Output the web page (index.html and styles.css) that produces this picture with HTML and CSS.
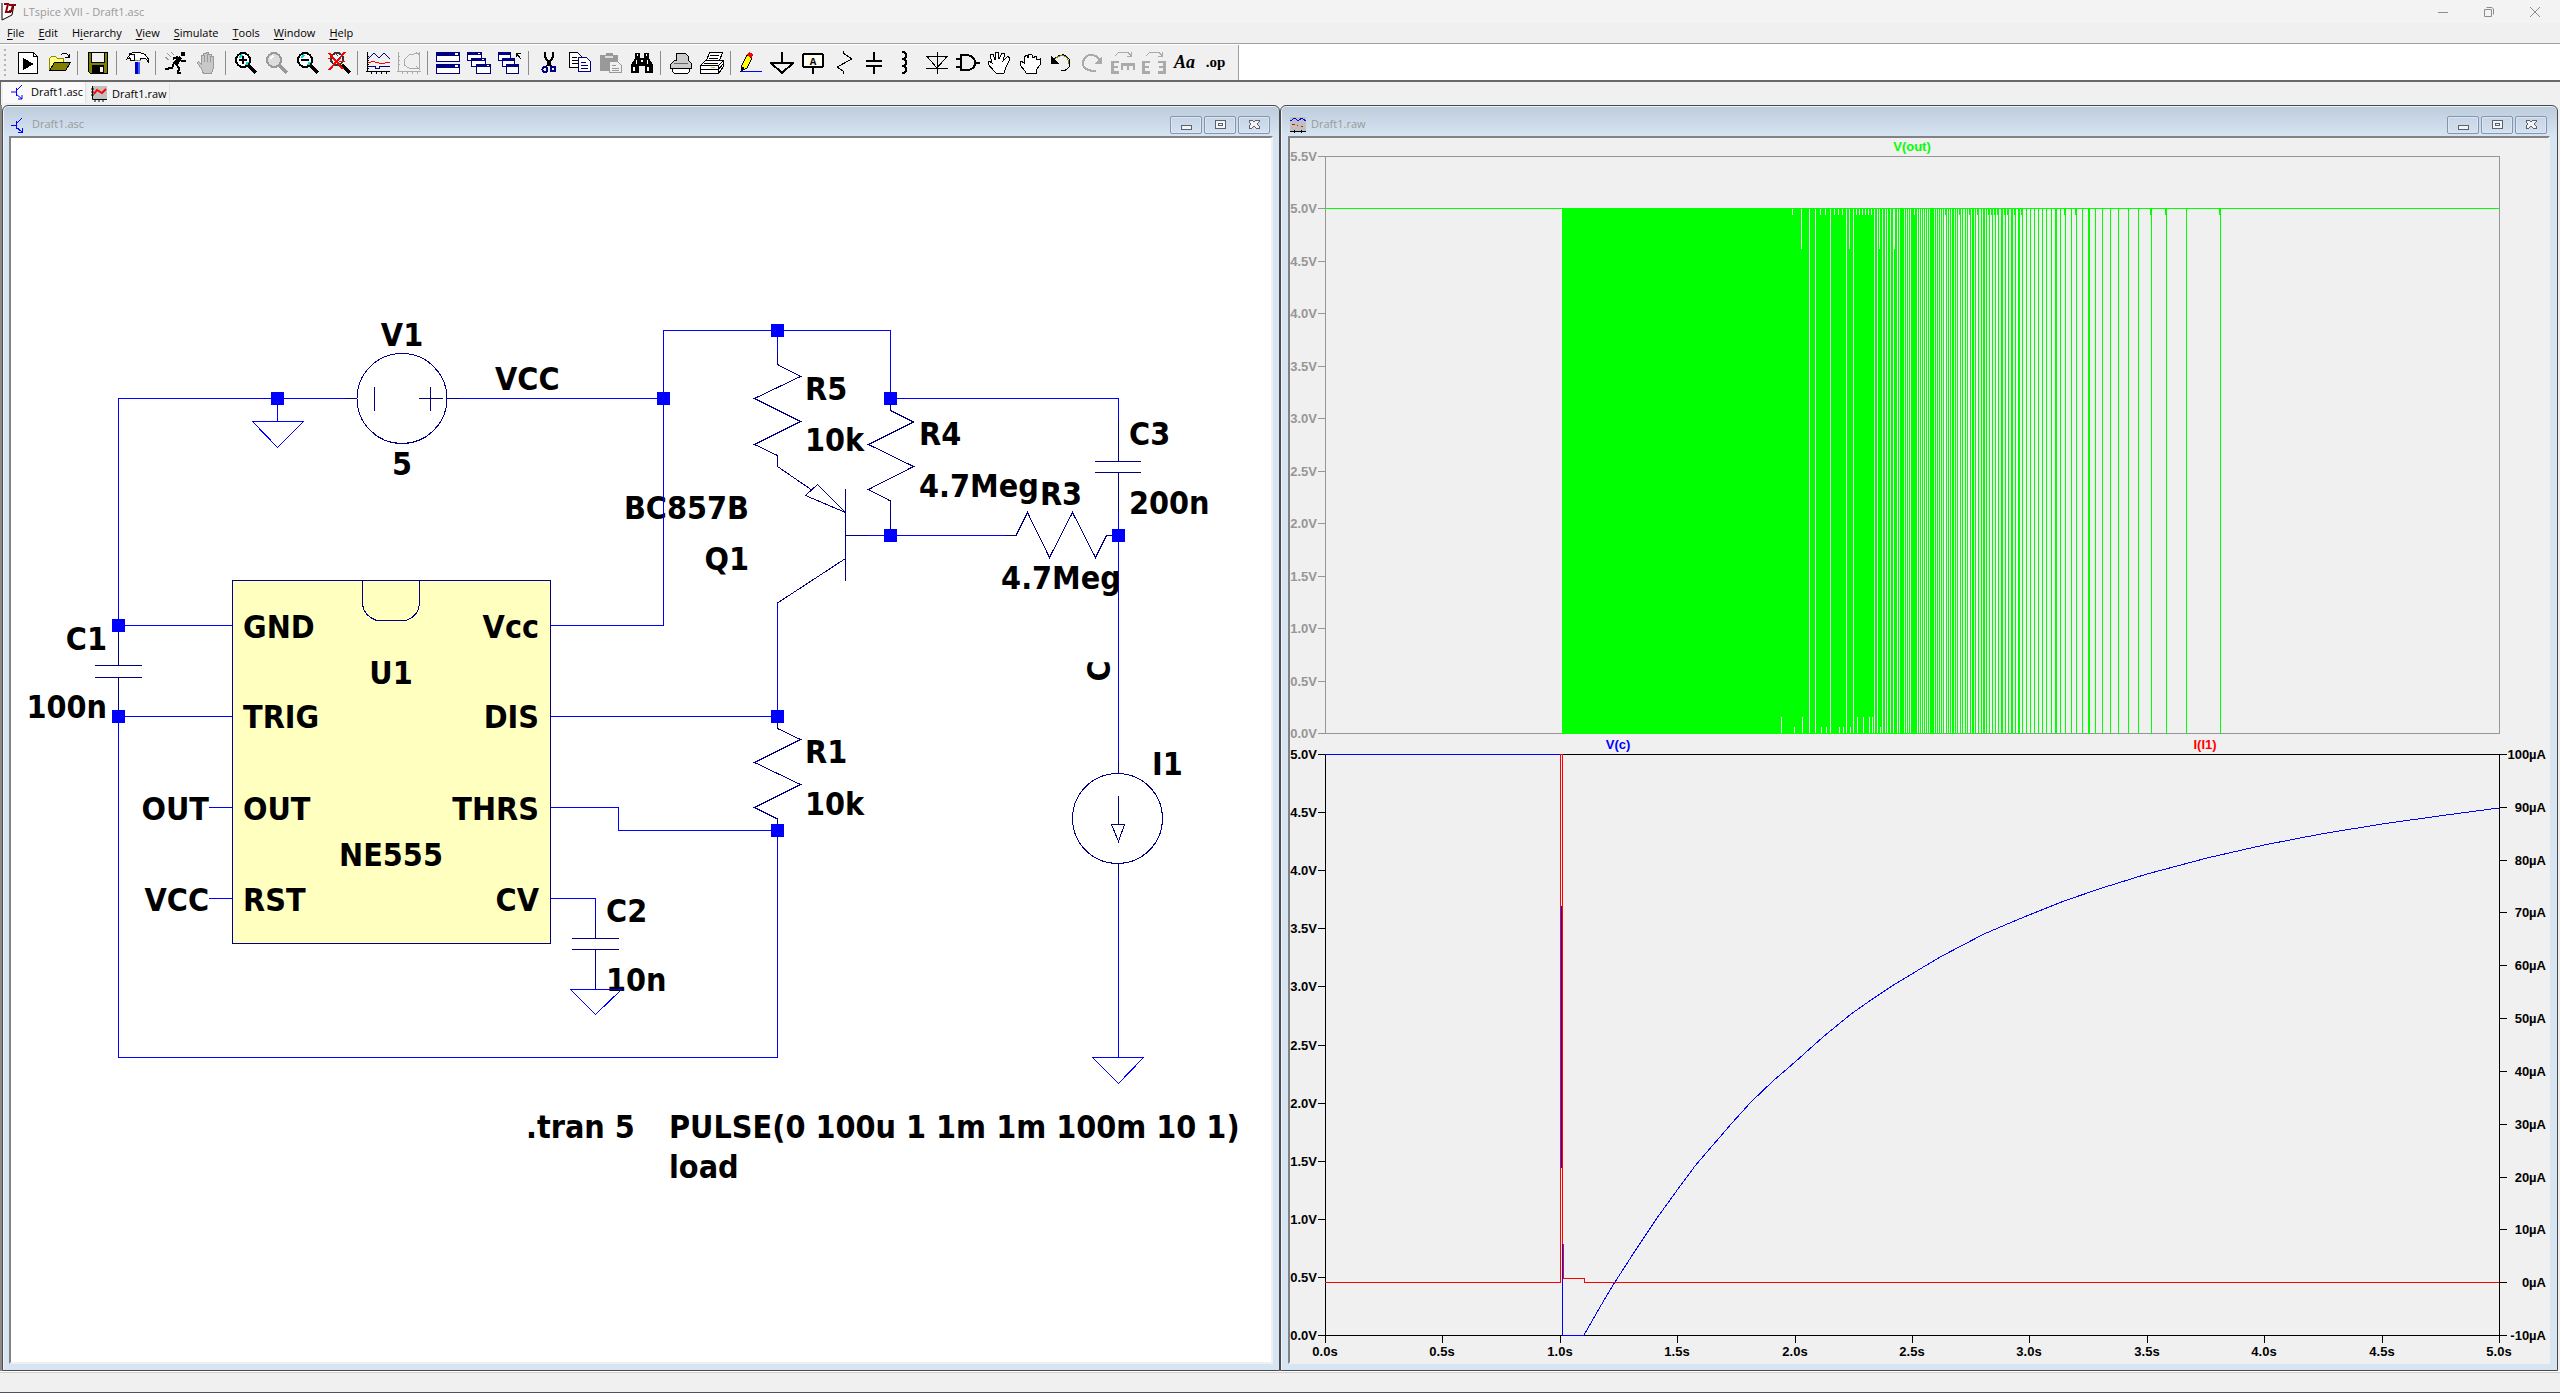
FILE: index.html
```html
<!DOCTYPE html>
<html lang="en">
<head>
    <meta charset="UTF-8">
    <meta name="viewport" content="width=device-width, initial-scale=1.0">
    <title>LTspice XVII - Draft1.asc</title>
    <link rel="stylesheet" href="styles.css">
</head>
<body>
    <header class="titlebar">
        <svg class="app-icon" width="16" height="20" viewBox="0 0 16 20">
            <path d="M1 1V18L11 13L13 2" fill="#fff" stroke="#000"/>
            <path d="M3 2H7L5 10H9V8M8 3H15M12 3L10 10" fill="none" stroke="#8b0000" stroke-width="2"/>
        </svg>
        <span class="app-title">LTspice XVII - Draft1.asc</span>
        <div class="app-controls">
            <button type="button" aria-label="Minimize"><svg width="10" height="10"><path d="M0 5.5H10"/></svg></button>
            <button type="button" aria-label="Restore"><svg width="10" height="10"><path d="M.5 2.5H7.5V9.5H.5ZM2.5 .5H8L9.5 2V7.5"/></svg></button>
            <button type="button" aria-label="Close"><svg width="10" height="10"><path d="M0 0L10 10M10 0L0 10"/></svg></button>
        </div>
    </header>

    <nav class="menubar">
        <button type="button"><u>F</u>ile</button>
        <button type="button"><u>E</u>dit</button>
        <button type="button">H<u>i</u>erarchy</button>
        <button type="button"><u>V</u>iew</button>
        <button type="button"><u>S</u>imulate</button>
        <button type="button"><u>T</u>ools</button>
        <button type="button"><u>W</u>indow</button>
        <button type="button"><u>H</u>elp</button>
    </nav>

    <div class="toolbar-row">
        <div class="toolbar">
            <span class="grip"></span>
            <button type="button" title="Run"><svg viewBox="0 0 24 24"><path d="M2.500 1.500H17.500L21.500 5.500V22.500H2.500Z" fill="#fff" stroke="#000"/><path d="M17.500 1.500V5.500H21.500" fill="none" stroke="#000"/><path d="M7 7V19L18 13Z"/></svg></button>
            <button type="button" title="Open"><svg viewBox="0 0 24 24"><path d="M2.500 19V7.500L4.500 5.500H8.500L10.500 7.500H16.500V11.500" fill="#ffff80" stroke="#888800"/><path d="M2.500 19.500L7.500 11.500H23.500L18.500 19.500Z" fill="#808000" stroke="#000"/><path d="M14 4L16 2H19L21 4V6M18 6H23M22 3V7" fill="none" stroke="#000"/></svg></button>
            <i class="sep"></i>
            <button type="button" title="Save"><svg viewBox="0 0 24 24"><path d="M2.500 1.500H21.500V22.500H4.500L2.500 20.500Z" fill="#808000" stroke="#000"/><path d="M6 2H18V11H6Z" fill="#f0f0f0"/><path d="M6 14H18V23H6Z"/><path d="M14 16H17V21H14Z" fill="#f0f0f0"/><path d="M5.500 2V11.500H18.500V2" fill="none" stroke="#000"/></svg></button>
            <i class="sep"></i>
            <button type="button" title="Control Panel"><svg viewBox="0 0 24 24"><path d="M9.500 10V4L5 3.500L1.500 8.500L4.500 6.500L6 9.500ZM4 3L9 1.500H15L20 3.500L23.500 8V11L20 7L15 8V10" fill="#fff" stroke="#000"/><path d="M9.500 8.500H15.500V10H9.500Z" fill="#888"/><path d="M10 11H15V23H10Z" fill="#0000c0"/><path d="M13 11H15V23H13Z" fill="#3060ff"/></svg></button>
            <i class="sep"></i>
            <button type="button" title="Run simulation"><svg viewBox="0 0 24 24"><path d="M17 1H21V5H17ZM15 5L18 7L14 14L9 12ZM9 6L14 5V7L9 9ZM17 9L22 9V11L17 11Z"/><path d="M10 12L8 17L1 18M12 13L15 17L14 22H17" fill="none" stroke="#000" stroke-width="2"/><path d="M3 2L7 6M1 6L5 9M7 1L10 4" stroke="#999" fill="none"/></svg></button>
            <button type="button" title="Halt"><svg viewBox="0 0 24 24"><path d="M6.500 18L2.500 12L3.500 10.500L6.500 13V4H8.500V2H11.500V1H13.500V3H16.500V5H18.500V17L16.500 22.500H8.500Z" fill="#c8c8c8" stroke="#999"/><path d="M9.500 4V11M12.500 3V11M15.500 5V11" stroke="#999"/></svg></button>
            <i class="sep"></i>
            <button type="button" title="Zoom in"><svg viewBox="0 0 24 24"><circle cx="9" cy="9" r="7" fill="#fff" stroke="#000" stroke-width="2"/><path d="M5 7L8 4M12 14L14 11" stroke="#00dcdc" stroke-width="2"/><path d="M5 9H13M9 5V13" stroke="#000" stroke-width="2"/><path d="M14 14L22 22" stroke="#000" stroke-width="3"/></svg></button>
            <button type="button" title="Pan"><svg viewBox="0 0 24 24"><circle cx="9" cy="9" r="7" fill="#ddd" stroke="#999" stroke-width="2"/><path d="M5 8L8 5" stroke="#fff" stroke-width="2"/><path d="M14 14L22 22" stroke="#999" stroke-width="3"/></svg></button>
            <button type="button" title="Zoom out"><svg viewBox="0 0 24 24"><circle cx="9" cy="9" r="7" fill="#fff" stroke="#000" stroke-width="2"/><path d="M5 7L8 4M12 14L14 11" stroke="#00dcdc" stroke-width="2"/><path d="M5 9H13" stroke="#000" stroke-width="2"/><path d="M14 14L22 22" stroke="#000" stroke-width="3"/></svg></button>
            <button type="button" title="Zoom full extents"><svg viewBox="0 0 24 24"><circle cx="10" cy="8" r="6" fill="#cff" stroke="#333" stroke-width="2"/><path d="M15 14L23 22" stroke="#000" stroke-width="3"/><path d="M2 2L16 18M18 1L2 19" stroke="#f00" stroke-width="2"/><path d="M1 8L6 6M12 11L18 10M8 2L11 5" stroke="#f00"/></svg></button>
            <i class="sep"></i>
            <button type="button" title="Autorange"><svg viewBox="0 0 24 24"><path d="M1.500 1V20M0 20.500H24M1 5H3M1 9H3M1 13H3M1 17H3M5.500 20V23M10.500 20V23M15.500 20V23M20.500 20V23" fill="none" stroke="#000"/><path d="M2 8L8 2L13 7L18 2L24 8" fill="none" stroke="#000080"/><path d="M2 11.500H5M5 10.500H9M9 11.500H13M13 12.500H19M19 11.500H24" fill="none" stroke="#f00"/><path d="M2 15.500H9V17.500H13V15.500H24" fill="none" stroke="#000080"/></svg></button>
            <button type="button" title="FFT"><svg viewBox="0 0 24 24"><path d="M1.500 1V20M0 20.500H24M5.500 20V23M10.500 20V23M15.500 20V23M20.500 20V23M1 5H3M1 9H3M1 13H3M22 2L12 4L7 9V14L12 17L22 18M19 1L22 4M22 1V19M19 15L23 19" fill="none" stroke="#aaa"/></svg></button>
            <i class="sep"></i>
            <button type="button" title="Tile"><svg viewBox="0 0 24 24"><path d="M.5 1.500H23.500V10.500H.5ZM.5 13.500H23.500V22.500H.5Z" fill="#fff" stroke="#000080"/><path d="M0 1H24V5H0ZM0 13H24V17H0Z" fill="#000080"/><path d="M19 2H22V4H19ZM19 14H22V16H19Z" fill="#fff"/></svg></button>
            <button type="button" title="Cascade"><svg viewBox="0 0 24 24"><path d="M.5 1.500H14.500V9.500H.5ZM4.500 7.500H18.500V15.500H4.500ZM9.500 13.500H23.500V22.500H9.500Z" fill="#fff" stroke="#000080"/><path d="M0 1H15V4H0ZM5 7H19V10H5ZM10 13H24V16H10Z" fill="#000080"/><path d="M11 2H13V3H11ZM15 8H17V9H15ZM20 14H22V15H20Z" fill="#fff"/></svg></button>
            <button type="button" title="Close all"><svg viewBox="0 0 24 24"><path d="M.5 1.500H12.500V9.500H.5ZM4.500 7.500H16.500V15.500H4.500ZM8.500 13.500H20.500V22.500H8.500Z" fill="#fff" stroke="#000080"/><path d="M0 1H13V4H0ZM5 7H17V10H5ZM9 13H21V16H9Z" fill="#000080"/><path d="M23 8L18 2M18 6V2H23" fill="none" stroke="#000"/></svg></button>
            <i class="sep"></i>
            <button type="button" title="Cut"><svg viewBox="0 0 24 24"><path d="M8 1V6L14 15M16 1V6L10 15" fill="none" stroke="#000" stroke-width="2"/><circle cx="8" cy="18.500" r="2.500" fill="none" stroke="#000080" stroke-width="2"/><circle cx="16" cy="18" r="2.500" fill="none" stroke="#000080" stroke-width="2"/></svg></button>
            <button type="button" title="Copy"><svg viewBox="0 0 24 24"><path d="M1.500 1.500H9.500L13.500 5.500V16.500H1.500Z" fill="#fff" stroke="#000"/><path d="M4 6H9M4 9H11M4 12H11" stroke="#000"/><path d="M10.500 6.500H18.500L22.500 10.500V20.500H10.500Z" fill="#fff" stroke="#000080"/><path d="M13 11H18M13 14H20M13 17H20" stroke="#000080"/></svg></button>
            <button type="button" title="Paste"><svg viewBox="0 0 24 24"><path d="M1 4H7V2H14V4H19V20H1Z" fill="#999"/><path d="M6 5H14V7H6Z" fill="#ddd"/><path d="M10.500 10.500H18.500L22.500 14.500V21.500H10.500Z" fill="#f0f0f0" stroke="#999"/><path d="M13 14H17M13 17H20M13 19H20" stroke="#999"/></svg></button>
            <button type="button" title="Find"><svg viewBox="0 0 24 24"><path d="M5 2H10V7H14V2H19V7L23 14V22H15V15H9V22H1V14L5 7Z"/><path d="M7 3H8V5H7ZM16 3H17V5H16ZM6 9H7V13H6ZM11 9H13V11H11ZM17 9H18V13H17ZM3 16H5V20H3ZM17 16H19V20H17Z" fill="#fff"/></svg></button>
            <i class="sep"></i>
            <button type="button" title="Print"><svg viewBox="0 0 24 24"><path d="M7.500 9.500V2.500H16.500L19.500 5.500V9.500L22.500 12.500V17.500H1.500V13.500L5.500 9.500Z" fill="#ccc" stroke="#000"/><path d="M3.500 17.500V20.500L5.500 22.500H18.500L20.500 20.500V17.500Z" fill="#fff" stroke="#000"/><path d="M5 12H19" stroke="#666"/></svg></button>
            <button type="button" title="Print setup"><svg viewBox="0 0 24 24"><path d="M6.500 9.500L9.500 1.500H22.500L19.500 9.500" fill="#fff" stroke="#000"/><path d="M.5 14.500L5.500 9.500H23.500V15.500L18.500 22.500H.5ZM.5 14.500H18.500V22.500M18.500 14.500L23.500 9.500M.5 18.500H18.500M18.500 18.500L23.500 12.500" fill="#fff" stroke="#000"/><path d="M10 4H19M9 7H18M4 12H18" stroke="#000"/><path d="M11 16H15V17H11Z" fill="#cc0"/></svg></button>
            <i class="sep"></i>
            <button type="button" title="Wire"><svg viewBox="0 0 24 24"><path d="M8 4L13 7L8 17L2 20L3 14Z" fill="#ff0" stroke="#000"/><path d="M8 4L10 1L14 3L13 7Z" fill="#f00"/><path d="M2 15L6 17L2 20Z"/><path d="M2 20.500H23" stroke="#00f"/></svg></button>
            <button type="button" title="Ground"><svg viewBox="0 0 24 24"><path d="M12 1V12M1 12H23L12 22Z" fill="none" stroke="#000" stroke-width="2"/></svg></button>
            <button type="button" title="Label net"><svg viewBox="0 0 24 24"><rect x="2" y="3" width="20" height="13" rx="2" fill="#ffe" stroke="#000" stroke-width="2"/><path d="M12 16V23" stroke="#000" stroke-width="2"/><text class="ico-a" x="12" y="14">A</text></svg></button>
            <button type="button" title="Resistor"><svg viewBox="0 0 24 24"><path d="M11 0V2L20 8L5 16L11 20V23" fill="none" stroke="#000"/></svg></button>
            <button type="button" title="Capacitor"><svg viewBox="0 0 24 24"><path d="M11 1V10M11 15V23M3 10H19M3 15H19" fill="none" stroke="#000" stroke-width="2"/></svg></button>
            <button type="button" title="Inductor"><svg viewBox="0 0 24 24"><path d="M8 1H10Q15 4 10 8H8H10Q15 11 10 15H8H10Q15 18 10 22H8" fill="none" stroke="#000" stroke-width="2"/></svg></button>
            <button type="button" title="Diode"><svg viewBox="0 0 24 24"><path d="M12 1V23M1 5.500H23M1 17.500H23M2 5.500L12 17L22 5.500" fill="none" stroke="#000"/></svg></button>
            <button type="button" title="Component"><svg viewBox="0 0 24 24"><path d="M5 4H12Q19 6 19 12Q19 18 12 19H5ZM0 8H5M0 16H5M19 12H24" fill="none" stroke="#000" stroke-width="2"/></svg></button>
            <button type="button" title="Move"><svg viewBox="0 0 24 24"><path d="M7 20L1 13L2 10L5 12L3 4L6 3L8 9L8 2L11 1L12 8L15 2L18 3L16 10L21 5L23 8L19 16L17 22H9Z" fill="#fff" stroke="#000"/></svg></button>
            <button type="button" title="Drag"><svg viewBox="0 0 24 24"><path d="M7 20L2 14L3 10L6 12V6L9 4L10 7L11 3L14 4L15 7L18 5L19 9L22 8V14L18 19V22H8Z" fill="#fff" stroke="#000"/></svg></button>
            <button type="button" title="Undo"><svg viewBox="0 0 24 24"><path d="M4 10Q9 3 15 4Q22 7 21 14Q19 20 12 20" fill="none" stroke="#000"/><path d="M5 9Q9 4 15 5Q20 7 20 13" fill="none" stroke="#808000"/><path d="M2 5V13H10Z"/></svg></button>
            <button type="button" title="Redo"><svg viewBox="0 0 24 24"><path d="M21 10Q16 3 9 4Q2 7 3 14Q5 20 16 20" fill="none" stroke="#aaa" stroke-width="2"/><path d="M22 5V13H14Z" fill="#aaa"/></svg></button>
            <button type="button" title="Rotate"><svg viewBox="0 0 24 24"><path d="M4 5L8 1H17L20 5M16 5H20V1" fill="none" stroke="#aaa"/><path d="M0 10H8V12H3V15H7V17H3V20H8V23H0ZM10 12H24V19H22V15H18V19H16V15H12V19H10Z" fill="#aaa"/></svg></button>
            <button type="button" title="Mirror"><svg viewBox="0 0 24 24"><path d="M4 5L8 1H17L20 5M16 5H20V1" fill="none" stroke="#aaa"/><path d="M0 10H8V12H3V15H7V17H3V20H8V23H0ZM24 10H16V12H21V15H17V17H21V20H16V23H24Z" fill="#aaa"/></svg></button>
            <button type="button" title="Text" class="glyph text-tool">Aa</button>
            <button type="button" title="SPICE directive" class="glyph">.op</button>
        </div>
    </div>

    <div class="tabs">
        <button type="button" class="tab active">
            <svg width="16" height="16" viewBox="0 0 16 16"><path d="M0 8H5M5.500 4V12M5 7L11 1M5 10L11 15M11 11V15H7" fill="none" stroke="#00f" stroke-width="1"/></svg>
            Draft1.asc
        </button>
        <button type="button" class="tab">
            <svg width="16" height="16" viewBox="0 0 16 16"><path d="M1 0H16V13H1Z" fill="#c0c0c0"/><path d="M1.500 0V13.500H16M0 3H3M0 6H3M0 9H3M4 13V16M8 13V16M12 13V16" fill="none" stroke="#000"/><path d="M3 8L6 4L11 7L15 3" fill="none" stroke="#f00" stroke-width="2"/></svg>
            Draft1.raw
        </button>
    </div>

    <main class="mdi">
        <section class="child">
            <div class="child-title">
                <svg width="16" height="16" viewBox="0 0 16 16"><path d="M0 8H5M5.500 4V12M5 7L11 1M5 10L11 15M11 11V15H7" fill="none" stroke="#00f"/></svg>
                <span>Draft1.asc</span>
                <div class="child-controls">
                    <button type="button" aria-label="Minimize"><svg width="12" height="12"><rect x="1" y="6" width="10" height="4"/></svg></button>
                    <button type="button" aria-label="Maximize"><svg width="12" height="12"><rect x="1" y="1" width="10" height="8"/><rect x="4" y="4" width="4" height="2"/></svg></button>
                    <button type="button" aria-label="Close"><svg width="12" height="12"><path d="M1 1H4L6 3L8 1H11V3L9 5L11 7V9H8L6 7L4 9H1V7L3 5L1 3Z"/></svg></button>
                </div>
            </div>
            <div class="pane schematic">
                <svg viewBox="11 138 1260 1224" preserveAspectRatio="xMinYMin meet">
                    <rect class="chip" x="232.500" y="580.500" width="318" height="363"/>
                    <g class="label">
                        <text class="mid" x="402" y="346">V1</text>
                        <text class="mid" x="402" y="475">5</text>
                        <text x="495" y="390">VCC</text>
                        <text class="end" x="749" y="519">BC857B</text>
                        <text class="end" x="749" y="570">Q1</text>
                        <text class="end" x="107" y="650">C1</text>
                        <text class="end" x="107" y="718">100n</text>
                        <text x="243" y="638">GND</text>
                        <text x="243" y="728">TRIG</text>
                        <text x="243" y="820">OUT</text>
                        <text x="243" y="911">RST</text>
                        <text class="end" x="539" y="638">Vcc</text>
                        <text class="end" x="539" y="728">DIS</text>
                        <text class="end" x="539" y="820">THRS</text>
                        <text class="end" x="539" y="911">CV</text>
                        <text class="mid" x="391" y="684">U1</text>
                        <text class="mid" x="391" y="866">NE555</text>
                        <text class="end" x="209" y="820">OUT</text>
                        <text class="end" x="209" y="911">VCC</text>
                        <text x="805" y="400">R5</text>
                        <text x="805" y="451">10k</text>
                        <text x="919" y="445">R4</text>
                        <text x="919" y="497">4.7Meg</text>
                        <text class="mid" x="1061" y="505">R3</text>
                        <text class="mid" x="1061" y="589">4.7Meg</text>
                        <text x="1129" y="445">C3</text>
                        <text x="1129" y="514">200n</text>
                        <text class="mid" transform="translate(1110 671) rotate(-90)">C</text>
                        <text x="1152" y="775">I1</text>
                        <text x="805" y="763">R1</text>
                        <text x="805" y="815">10k</text>
                        <text x="606" y="922">C2</text>
                        <text x="606" y="991">10n</text>
                        <text x="526" y="1138">.tran 5</text>
                        <text x="669" y="1138">PULSE(0 100u 1 1m 1m 100m 10 1)</text>
                        <text x="669" y="1178">load</text>
                    </g>
                    <g class="wire">
                        <path d="M346 398.500H118.500V625.500H232M118.500 716.500H232M118.500 716V1057.500H777.500V830"/>
                        <path d="M459 398.500H663.500M551 625.500H663.500V330.500H890.500V398.500H1118.500V421M777.500 330V353"/>
                        <path d="M551 716.500H777.500V603M551 807.500H618.500V830.500H777M551 898.500H595.500V921"/>
                        <path d="M209 807.500H232M209 898.500H232M868 535.500H1005M1118.500 512V762M1118.500 875V1057"/>
                        <path d="M277.500 398V421.500M252.500 421.500H303.500L277.500 447.500Z"/>
                        <path d="M570.500 989.500H621.500L595.500 1014.500ZM1092.500 1057.500H1143.500L1118.500 1083.500Z"/>
                    </g>
                    <g class="part">
                        <circle cx="402" cy="398.500" r="45"/>
                        <path d="M346 398.500H357M447 398.500H459M374.500 387V411M430.500 387V411M419 398.500H443"/>
                        <path d="M118.500 625V665.500M95 665.500H142M95 677.500H142M118.500 677V716"/>
                        <path d="M362.500 580V604Q363 615 376.500 620.500H406.500Q419 615 419.500 604V580"/>
                        <path d="M595.500 921V938.500M572 938.500H619M572 949.500H619M595.500 949V989"/>
                        <path d="M777.500 353V364.500L800.500 376.500L754.500 398.500L800.500 421.500L754.500 444.500L777.500 455.500V466.500L811 489.500"/>
                        <path d="M817.500 484.500L805.500 495.500L845.500 512.500ZM845.500 489V581M845.500 535.500H868M845.500 558.500L777.500 603"/>
                        <path d="M890.500 398V410.500L913.500 422L868.500 444.500L913.500 466.500L868.500 489.500L890.500 501V535"/>
                        <path d="M1005 535.500H1016L1027.500 512.500L1049.500 557.500L1072.500 512.500L1095.500 557.500L1106.500 535.500H1118"/>
                        <path d="M1118.500 421V461.500M1095 461.500H1141M1095 472.500H1141M1118.500 472V512"/>
                        <path d="M777.500 716V728.500L800.500 739.500L754.500 762.500L800.500 784.500L754.500 807.500L777.500 819V830"/>
                        <circle cx="1117.500" cy="818.500" r="45"/>
                        <path d="M1118.500 762V773M1118.500 796V824M1111.500 824.500H1124.500L1118.500 841.500ZM1118.500 863V875"/>
                    </g>
                    <g class="node">
                        <rect x="271" y="392" width="13" height="13"/>
                        <rect x="657" y="392" width="13" height="13"/>
                        <rect x="771" y="324" width="13" height="13"/>
                        <rect x="884" y="392" width="13" height="13"/>
                        <rect x="884" y="529" width="13" height="13"/>
                        <rect x="1112" y="529" width="13" height="13"/>
                        <rect x="112" y="619" width="13" height="13"/>
                        <rect x="112" y="710" width="13" height="13"/>
                        <rect x="771" y="710" width="13" height="13"/>
                        <rect x="771" y="824" width="13" height="13"/>
                    </g>
                </svg>
            </div>
        </section>

        <section class="child waveform">
            <div class="child-title">
                <svg width="16" height="16" viewBox="0 0 16 16"><path d="M0 0H16V15H0Z" fill="#c0c0c0"/><path d="M0 4L5 1L8 4L12 1L16 4" fill="none" stroke="#00f"/><path d="M2 7.500H5M7 8.500H8M11 9.500H13" stroke="#f00"/><path d="M0 14.500H16M4 13V16M11 13V16" stroke="#000"/></svg>
                <span>Draft1.raw</span>
                <div class="child-controls">
                    <button type="button" aria-label="Minimize"><svg width="12" height="12"><rect x="1" y="6" width="10" height="4"/></svg></button>
                    <button type="button" aria-label="Maximize"><svg width="12" height="12"><rect x="1" y="1" width="10" height="8"/><rect x="4" y="4" width="4" height="2"/></svg></button>
                    <button type="button" aria-label="Close"><svg width="12" height="12"><path d="M1 1H4L6 3L8 1H11V3L9 5L11 7V9H8L6 7L4 9H1V7L3 5L1 3Z"/></svg></button>
                </div>
            </div>
            <div class="pane">
                <svg class="plot" viewBox="1290 138 1258 1224" preserveAspectRatio="xMinYMin meet">
                    <g id="axes"></g>
                    <path class="trace vout" d="M1325 208.500H2499"/>
                    <g id="pulses"></g>
                    <path class="trace vc" d="M1325 754.500H1560M1562.500 1244V1335.500H1584"/>
                    <polyline class="trace vc" points="1584,1335 1600,1307 1615,1282 1635,1251 1657,1218 1678,1189 1695,1166 1713,1145 1732,1123 1751,1102 1773,1081 1795,1062 1823,1037 1851,1014 1871,1000 1892,986 1920,969 1942,956 1963,945 1984,934 2005,925 2029,915 2064,901 2102,888 2147,874 2207,858 2264,845 2321,834 2382,824 2439,816 2499,808"/>
                    <rect class="burst" x="1561" y="906" width="1" height="262"/>
                    <path class="trace il" d="M1325 1282.500H1560.500V754.500H1562.500V1244M1563.500 1244V1278.500H1584V1282.500H2499"/>
                    <text class="mid c-vout" x="1912" y="151">V(out)</text>
                    <text class="mid c-vc" x="1618" y="749">V(c)</text>
                    <text class="mid c-il" x="2205" y="749">I(I1)</text>
                </svg>
            </div>
        </section>
    </main>

    <footer class="statusbar"></footer>

    <script src="script.js"></script>
</body>
</html>
```
FILE: styles.css
```css
* {
    box-sizing: border-box;
}
body {
    margin: 0;
    height: 100vh;
    display: flex;
    flex-direction: column;
    overflow: hidden;
    background: #f0f0f0;
    color: #000;
    font-family: "Open Sans", sans-serif;
    font-size: 11px;
}
button {
    margin: 0;
    padding: 0;
    border: 0;
    background: none;
    color: inherit;
    font: inherit;
}
svg {
    display: block;
}

/* application frame */
.titlebar {
    height: 23px;
    flex: none;
    display: flex;
    align-items: center;
    gap: 6px;
    padding: 0 2px 0 1px;
    background: #f3f3f3;
    color: #999;
}
.app-controls {
    display: flex;
    margin-left: auto;
}
.app-controls button {
    width: 46px;
    height: 20px;
    display: flex;
    align-items: center;
    justify-content: center;
}
.app-controls path {
    fill: none;
    stroke: #8c8c8c;
}
.menubar {
    height: 21px;
    flex: none;
    display: flex;
    align-items: center;
    gap: 14px;
    padding: 0 0 2px 7px;
    border-bottom: 1px solid #a0a0a0;
}
.menubar u {
    text-underline-offset: 2px;
}

/* toolbar */
.toolbar-row {
    height: 38px;
    flex: none;
    background: #fff;
    border-bottom: 2px solid #696969;
    border-top: 1px solid #fff;
}
.toolbar {
    display: flex;
    align-items: center;
    width: max-content;
    height: 35px;
    padding: 0 7px 0 4px;
    background: #f0f0f0;
    border-right: 1px solid #a0a0a0;
}
.grip {
    width: 2px;
    height: 28px;
    margin-right: 6px;
    background: repeating-linear-gradient(#b4b4b4 0 2px, transparent 2px 5px);
}
.toolbar button {
    width: 31px;
    height: 30px;
    display: flex;
    align-items: center;
    justify-content: center;
}
.toolbar svg {
    width: 24px;
    height: 24px;
    shape-rendering: crispEdges;
}
.sep {
    width: 1px;
    height: 24px;
    margin: 0 4px 0 3px;
    background: #8c8c8c;
}
.ico-a {
    font: bold 11px "Liberation Mono", monospace;
    text-anchor: middle;
}
.toolbar .glyph {
    font: bold 15px "Liberation Serif", serif;
}
.toolbar .text-tool {
    font-size: 18px;
    font-style: italic;
}

/* document tabs */
.tabs {
    height: 23px;
    flex: none;
    display: flex;
    align-items: flex-end;
    gap: 2px;
    padding: 0 0 2px 2px;
    border-left: 1px solid #696969;
}
.tab {
    height: 19px;
    display: flex;
    align-items: center;
    gap: 5px;
    padding: 0 2px 0 3px;
    background: #f3f3f3;
    border-right: 1px solid #e0e0e0;
}
.tab.active {
    height: 21px;
    padding: 0 2px 2px 8px;
    gap: 4px;
    background: #fafafa;
}

/* child windows */
.mdi {
    flex: 1;
    min-height: 0;
    display: grid;
    grid-template-columns: minmax(0, 1fr) minmax(0, 1fr);
    padding-right: 2px;
    border-left: 2px solid #8a8a8a;
}
.child {
    min-height: 0;
    display: flex;
    flex-direction: column;
    padding: 0 6px 6px;
    background: #d7e4f2 linear-gradient(#bccbdb, #d7e4f2 30px) no-repeat;
    border: 1px solid #4a4a4a;
    border-radius: 6px 6px 0 0;
    box-shadow: inset 0 1px #e6eef6, inset 1px 0 #f0f4fa;
}
.waveform {
    padding: 0 7px 6px;
}
.child-title {
    height: 30px;
    flex: none;
    display: flex;
    align-items: center;
    gap: 5px;
    padding: 7px 0 0 2px;
    color: #999;
}
.child-title span {
    padding-bottom: 2px;
}
.child-title svg {
    shape-rendering: crispEdges;
}
.child-controls {
    display: flex;
    gap: 2px;
    height: 26px;
    margin-left: auto;
    padding: 4px 3px 0 0;
}
.child-controls button {
    width: 32px;
    height: 18px;
    display: flex;
    align-items: center;
    justify-content: center;
    border: 1px solid #8594b0;
    border-radius: 2px;
    box-shadow: inset 0 0 0 1px #dbe6f2;
}
.child-controls rect,
.child-controls path {
    fill: #f4f4f4;
    stroke: #5a6070;
}
.pane {
    flex: 1;
    min-height: 0;
    border: 2px solid;
    border-color: #828282 #f0f0f0 #f0f0f0 #828282;
    background: #f0f0f0;
}
.pane svg {
    width: 100%;
    height: 100%;
}
.schematic {
    background: #fff;
}

/* schematic drawing */
.wire,
.part,
.chip {
    fill: none;
    stroke: #00f;
    shape-rendering: crispEdges;
}
.part,
.chip {
    stroke: #000080;
}
.chip {
    fill: #ffffc0;
}
.node {
    fill: #00f;
}
.label {
    font: bold 32px "DejaVu Sans Condensed", "Noto Sans", sans-serif;
}
.mid {
    text-anchor: middle;
}
.end {
    text-anchor: end;
}

/* waveform plot */
.plot {
    font: bold 13px "Liberation Sans", sans-serif;
    shape-rendering: crispEdges;
}
.axis {
    fill: none;
    stroke: #000;
}
.axis.dim {
    stroke: #969696;
}
.dim-text {
    fill: #969696;
}
.trace {
    fill: none;
}
.vout {
    stroke: #0f0;
}
.vc {
    stroke: #00f;
}
.il {
    stroke: #f00;
}
.c-vout,
.pulse {
    fill: #0f0;
}
.notch {
    fill: #f0f0f0;
}
.c-vc,
.burst {
    fill: #00f;
}
.c-il {
    fill: #f00;
}

.statusbar {
    height: 22px;
    flex: none;
    border-top: 1px solid #fff;
    border-bottom: 1px solid #4a5068;
    box-shadow: inset 0 1px #d0d0d0;
}
```
FILE: script.js
```js
const NS = 'http://www.w3.org/2000/svg';
const axes = document.getElementById('axes');
const pulses = document.getElementById('pulses');

const LEFT = 1325, RIGHT = 2499;
const TOP1 = 156, BOTTOM1 = 733;
const TOP2 = 754, BOTTOM2 = 1335;

function add(parent, name, attrs, text) {
    const el = document.createElementNS(NS, name);
    for (const key in attrs) el.setAttribute(key, attrs[key]);
    if (text) el.textContent = text;
    parent.appendChild(el);
}

function frame(top, bottom, cls) {
    add(axes, 'rect', { class: cls, x: LEFT + 0.5, y: top + 0.5, width: RIGHT - LEFT, height: bottom - top });
}

// voltage scale on the left edge
function voltAxis(top, bottom, max, cls, textCls) {
    const steps = max * 2;
    for (let i = 0; i <= steps; i++) {
        const y = Math.round(bottom - (bottom - top) * i / steps);
        add(axes, 'path', { class: cls, d: `M${LEFT - 7} ${y + 0.5}H${LEFT}` });
        add(axes, 'text', { class: 'end ' + textCls, x: LEFT - 8, y: y + 5 }, (i / 2).toFixed(1) + 'V');
    }
}

frame(TOP1, BOTTOM1, 'axis dim');
frame(TOP2, BOTTOM2, 'axis');
voltAxis(TOP1, BOTTOM1, 5.5, 'axis dim', 'dim-text');
voltAxis(TOP2, BOTTOM2, 5, 'axis', '');

// current scale, -10 to 100 uA
for (let i = 0; i <= 11; i++) {
    const y = Math.round(BOTTOM2 - (BOTTOM2 - TOP2) * i / 11);
    add(axes, 'path', { class: 'axis', d: `M${RIGHT} ${y + 0.5}H${RIGHT + 8}` });
    add(axes, 'text', { class: 'end', x: RIGHT + 47, y: y + 5 }, (i * 10 - 10) + 'µA');
}

// time scale
for (let i = 0; i <= 10; i++) {
    const x = Math.round(LEFT + (RIGHT - LEFT) * i / 10);
    add(axes, 'path', { class: 'axis', d: `M${x + 0.5} ${BOTTOM2}V${BOTTOM2 + 8}` });
    add(axes, 'text', { class: 'mid', x: x, y: BOTTOM2 + 21 }, (i / 2).toFixed(1) + 's');
}

// oscillator output: solid block, then pulses getting rarer
function bar(cls, x, y, w, h) {
    add(pulses, 'rect', { class: cls, x: x, y: y, width: w, height: h });
}
bar('pulse', 1562, 208, 355, 526);

const gaps = [1809, 1815, 1830, 1846, 1853, 1874, 1877, 1882, 1885, 1887, 1890, 1893, 1897, 1899, 1904, 1906, 1908, 1910];
gaps.forEach(x => bar('notch', x, 209, 1, 524));

const topNotches = [1792, 1820, 1825, 1834, 1838, 1842, 1856, 1859, 1862, 1865, 1868, 1871, 1914];
topNotches.forEach(x => bar('notch', x, 209, 1, 6));
[1801, 1849, 1879, 1894].forEach(x => bar('notch', x, 209, 1, 40));

[1781, 1802, 1857, 1863, 1869, 1872].forEach(x => bar('notch', x, 717, 1, 16));
[1794, 1821, 1826, 1839, 1843, 1850, 1880].forEach(x => bar('notch', x, 727, 1, 6));

const single = [1918, 1920, 1922, 1924, 1926, 1928, 1935, 1937, 1939, 1941, 1943, 1946, 1948, 1950, 1955, 1957,
    1960, 1962, 1965, 1967, 1970, 1975, 1978, 1981, 1986, 1989, 1992, 1995, 1998, 2005, 2008, 2015, 2022, 2026,
    2030, 2034, 2038, 2042, 2046, 2051, 2060, 2065, 2071, 2076, 2082, 2095, 2102, 2110, 2118, 2128, 2138, 2151,
    2166, 2186, 2220];
single.forEach(x => bar('pulse', x, 208, 1, 526));
[1952, 1972, 1983, 2001, 2011, 2018, 2055, 2088].forEach(x => bar('pulse', x, 208, 2, 526));
bar('pulse', 1930, 208, 4, 526);

// ringing at the top of some edges
[1945, 1959, 1969, 1977, 1988, 1991, 1994, 1997, 2004, 2007, 2014, 2021, 2064, 2075, 2150, 2165, 2219]
    .forEach(x => bar('pulse', x, 208, 1, 7));
```
